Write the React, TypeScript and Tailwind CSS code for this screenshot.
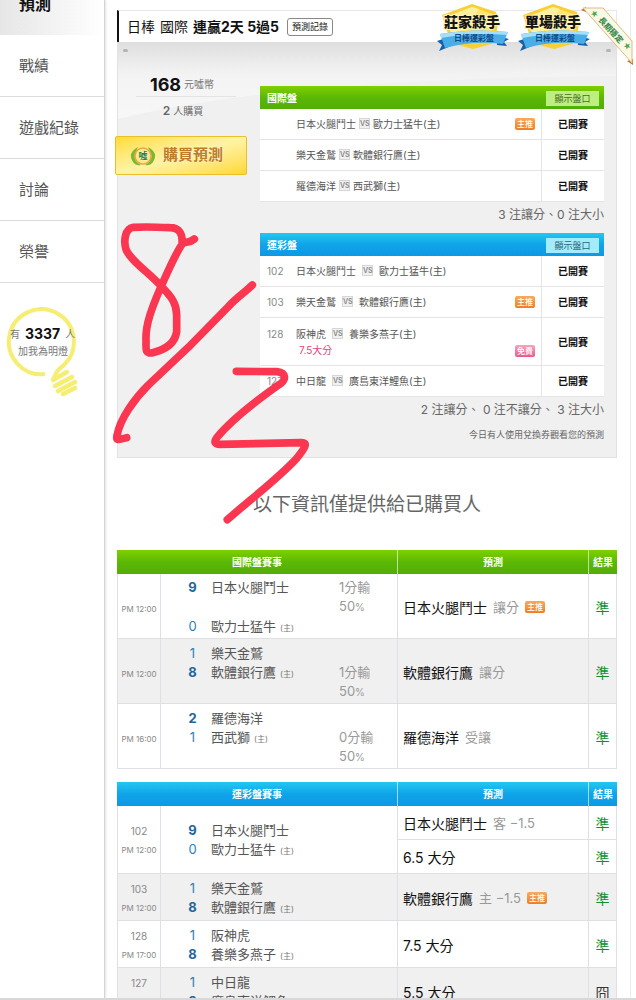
import type { ReactNode } from "react";

const FONT = "font-['Inter','Noto_Sans_CJK_TC',sans-serif]";
const GREEN = "bg-linear-to-b from-[#7fd000] via-[#5bb804] to-[#52ad08]";
const BLUE = "bg-linear-to-b from-[#23c8f0] via-[#10a4e8] to-[#0d98e6]";

function Vs({ wide }: { wide?: boolean }) {
  return (
    <span
      className={`inline-block h-[11px] w-[11px] border border-[#d6d6d6] bg-[#f0f0f0] text-center align-[2px] text-[7px] leading-[9px] font-semibold text-[#888] ${wide ? "mx-[6px]" : "mx-[3px]"}`}
    >
      VS
    </span>
  );
}

function Tag({ children, pink }: { children: ReactNode; pink?: boolean }) {
  return (
    <span
      className={`inline-block h-3 w-5 rounded-[2px] text-center text-[8px] leading-[12px] font-medium text-white ${pink ? "bg-linear-to-b from-[#f5a3c0] to-[#e8588c]" : "bg-linear-to-b from-[#f8a95a] to-[#ef7d22]"}`}
    >
      {children}
    </span>
  );
}

type Match = { no?: string; away: string; home: string; tag?: string; extra?: string };

function OddsTable({ title, blue, rows }: { title: string; blue?: boolean; rows: Match[] }) {
  return (
    <table className="w-full table-fixed border-separate border-spacing-0 bg-white text-left text-[10px] leading-4 text-[#555]">
      <colgroup>
        <col className="w-9" />
        <col />
        <col className="w-[30px]" />
        <col className="w-[63px]" />
      </colgroup>
      <thead>
        <tr className={blue ? BLUE : GREEN}>
          <th colSpan={3} className="h-[23px] pl-[7px] text-left font-bold text-white">
            {title}
          </th>
          <th className="pr-[5px] text-right">
            <button
              type="button"
              className={`h-[15px] w-[53px] text-[9px] leading-[15px] font-normal ${blue ? "bg-[#a4ecfb] text-[#2c6478]" : "bg-[#bdee82] text-[#4a6b26]"}`}
            >
              顯示盤口
            </button>
          </th>
        </tr>
      </thead>
      <tbody>
        {rows.map((r) => (
          <tr key={r.away}>
            <td className={`border-b border-[#e4e4e4] pl-[7px] text-[#888] ${r.extra ? "h-12 pt-2 align-top" : "h-[31px]"}`}>{r.no}</td>
            <td className={`border-b border-[#e4e4e4] whitespace-nowrap ${r.extra ? "pt-2 align-top" : ""}`}>
              {r.away}
              <Vs wide={blue} />
              {r.home}(主)
              {r.extra && <div className="pl-[3px] text-[#e0457c]">{r.extra}</div>}
            </td>
            <td className={`border-b border-[#e4e4e4] ${r.extra ? "pb-2 align-bottom" : ""}`}>
              {r.tag && (
                <div className="flex pl-1">
                  <Tag pink={!!r.extra}>{r.tag}</Tag>
                </div>
              )}
            </td>
            <td className="border-b border-l border-[#e4e4e4] text-center font-bold text-[#111]">已開賽</td>
          </tr>
        ))}
      </tbody>
    </table>
  );
}

type Pick = { text: string; note?: string; tag?: boolean; result: string };
type Game = {
  no?: string;
  time: string;
  away: string;
  home: string;
  score: [number, number];
  margin?: { side: "away" | "home"; text: string };
  picks: Pick[];
};

function TeamLine({ score, win, name, host, margin }: { score: number; win: boolean; name: string; host?: boolean; margin?: string }) {
  return (
    <div className="flex items-start">
      <span className={`w-[50px] shrink-0 pl-[13px] text-center ${win ? "font-bold text-[#1f669c]" : "text-[#2f7fb5]"}`}>{score}</span>
      <span className="flex-1 whitespace-nowrap">
        {name}
        {host && <span className="ml-1 text-[8px] text-[#777]">(主)</span>}
      </span>
      {margin && (
        <span className="w-[58px] text-[#999]">
          {margin}
          <br />
          50<span className="text-[10px]">%</span>
        </span>
      )}
    </div>
  );
}

function ResultTable({ title, blue, games }: { title: string; blue?: boolean; games: Game[] }) {
  const head = "h-6 border-l border-white/60 text-[10px] font-bold text-white first:border-l-0";
  const cell = "border-b border-l border-[#e0e0e4]";
  return (
    <table className="w-full table-fixed border-separate border-spacing-0 text-[13px] leading-[19px] text-[#555]">
      <colgroup>
        <col className="w-[43px]" />
        <col />
        <col className="w-[191px]" />
        <col className="w-[29px]" />
      </colgroup>
      <thead>
        <tr className={blue ? BLUE : GREEN}>
          <th colSpan={2} className={head}>{title}</th>
          <th className={head}>預測</th>
          <th className={head}>結果</th>
        </tr>
      </thead>
      {games.map((g, i) => (
        <tbody key={g.away} className={i % 2 ? "bg-[#f0f0f0]" : "bg-white"}>
          {g.picks.map((p, n) => (
            <tr key={p.text}>
              {n === 0 && (
                <>
                  <td
                    rowSpan={g.picks.length}
                    className={`${cell} text-center text-[8px] whitespace-nowrap text-[#888] ${blue ? "pt-[3px]" : "pt-[6px]"}`}
                  >
                    {g.no && <div className="text-[10px]">{g.no}</div>}
                    {g.time}
                  </td>
                  <td rowSpan={g.picks.length} className={`${cell} pt-[3px]`}>
                    <TeamLine
                      score={g.score[0]}
                      win={g.score[0] > g.score[1]}
                      name={g.away}
                      margin={g.margin?.side === "away" ? g.margin.text : undefined}
                    />
                    <TeamLine
                      score={g.score[1]}
                      win={g.score[1] > g.score[0]}
                      name={g.home}
                      host
                      margin={g.margin?.side === "home" ? g.margin.text : undefined}
                    />
                  </td>
                </>
              )}
              <td className={`${cell} pt-[2px] pl-[5px] whitespace-nowrap ${g.picks.length > 1 ? "h-[34px]" : blue ? "h-[47px]" : "h-[65px]"}`}>
                <div className="flex items-center gap-[6px]">
                  <span className="text-[14px] text-[#111]">{p.text}</span>
                  {p.note && <span className="text-[#999]">{p.note}</span>}
                  {p.tag && <Tag>主推</Tag>}
                </div>
              </td>
              <td className={`${cell} border-r pt-[2px] text-center text-[14px] ${p.result === "準" ? "text-[#0f8f2e]" : "text-[#333]"}`}>{p.result}</td>
            </tr>
          ))}
        </tbody>
      ))}
    </table>
  );
}

function Medal({ label }: { label: string }) {
  return (
    <svg viewBox="0 0 72 48" className="h-12 w-[72px]" role="img" aria-label={label}>
      <path d="M35 1 L59 9 L61 20 L58 40 L36 46 L14 40 L5 12 Z" fill="#f9cf35" />
      <path d="M35 4 L55 11 L57 20 L54 30 H14 L9 14 Z" fill="#ffe671" />
      <path d="M35 4 L42 6 L24 30 H14 L9 14 Z" fill="#fff0a0" />
      <path d="M0 38 L12 34 L14 43 L2 48 L5 42Z" fill="#1760a8" />
      <path d="M72 36 L60 33 L60 42 L70 43 L67 39Z" fill="#1760a8" />
      <path d="M3 31 Q36 25 71 29 L66 41 Q36 37 8 45 Z" fill="#49aee8" />
      <path d="M3 31 Q36 25 71 29 L70 32 Q36 29 4 35 Z" fill="#a5def9" />
      <text x="35" y="24" textAnchor="middle" fontSize="14" fontWeight="900" fill="#151515" stroke="#fff3b0" strokeWidth="2" paintOrder="stroke">
        {label}
      </text>
      <text x="37" y="38" textAnchor="middle" fontSize="8" fontWeight="600" fill="#0e4a86">
        日棒運彩盤
      </text>
    </svg>
  );
}

const sideLinks = ["戰績", "遊戲紀錄", "討論", "榮譽"];

export default function App() {
  return (
    <div className={`relative flex h-screen flex-col overflow-hidden bg-white ${FONT}`}>
      <div className="flex min-h-0 flex-1 overflow-hidden">
        <aside className="w-[105px] shrink-0 border-r border-[#d4d4d4] shadow-[1px_0_2px_#e4e4e4]">
          <nav>
            <a href="#forecast" className="block h-[35px] overflow-hidden bg-linear-to-r from-[#e6e6e6] to-white pl-[19px] text-base leading-[8px] font-bold text-[#111]">
              預測
            </a>
            {sideLinks.map((t) => (
              <a key={t} href={"#" + t} className="flex h-[62px] items-center border-b border-[#dcdcdc] pt-[2px] pl-[19px] text-[15px] text-[#555]">
                {t}
              </a>
            ))}
          </nav>
          <div className="relative mt-6 h-[96px]">
            <svg viewBox="0 0 90 96" className="absolute top-0 left-0 h-24 w-[90px]" fill="none" stroke="#f6ee72" aria-hidden="true">
              <path d="M45 67 A32.500 32.500 0 1 1 64 58 Q55 64 53 74" strokeWidth="4" />
              <path d="M53 73 L67 65 M55 79 L72 70 M58 84 L75 75 M63 87 L75 81" strokeWidth="4.500" strokeLinecap="round" />
            </svg>
            <div className="relative pt-[18px] text-[10px] leading-4 whitespace-nowrap text-[#777]">
              <p className="flex h-[18px] items-center gap-[5px] pl-[10px]">
                有<strong className="text-[14px] text-[#111]">3337</strong>人
              </p>
              <p className="pl-[18px]">加我為明燈</p>
            </div>
          </div>
        </aside>

        <main className="relative mr-[5px] min-w-0 flex-1 border-r border-[#ececec] pt-[10px] pr-[13px] pl-3">
          <header className="flex h-8 items-center border-t border-r border-l-2 border-t-[#e8e8e8] border-r-[#e8e8e8] border-l-[#111] pl-2 text-[14px] text-[#111]">
            <h1 className="flex items-center gap-[5px] whitespace-nowrap">
              <span>日棒</span>
              <span>國際</span>
              <strong>連贏2天 5過5</strong>
            </h1>
            <button type="button" className="ml-2 h-[18px] w-[46px] rounded-[3px] border border-[#888] text-[9px] leading-4 whitespace-nowrap">
              預測記錄
            </button>
          </header>

          <div className="absolute top-[3px] right-[40px] z-10 flex gap-[9px]">
            <Medal label="莊家殺手" />
            <Medal label="單場殺手" />
          </div>
          <svg viewBox="0 0 52 58" className="absolute top-[7px] -right-[3px] z-10 h-[58px] w-[52px]" role="img" aria-label="長期穩定">
            <path d="M0 3 L5 0 V5Z M52 52 V58 L46 54Z" fill="#c66b31" />
            <path d="M2 1 H22 L51 34 V56 Z" fill="#fbf8e6" stroke="#dcbd83" strokeWidth="1" />
            <g transform="translate(30 23) rotate(47)">
              <text textAnchor="middle" x="0" y="3" fontSize="8" fontWeight="700" fill="#2f8444">長期穩定</text>
              <text textAnchor="middle" x="-23" y="4" fontSize="8" fill="#48a64c">★</text>
              <text textAnchor="middle" x="23" y="2" fontSize="8" fill="#48a64c">★</text>
            </g>
          </svg>

          <section className="relative flex h-[416px] border border-t-0 border-[#e2e2e2] bg-[#f0f0f0] bg-linear-to-b from-[#dedede] via-[#f0f0f0] via-8% to-[#f0f0f0] pr-3">
            <svg viewBox="0 0 498 90" preserveAspectRatio="none" className="pointer-events-none absolute top-0 left-0 h-[90px] w-full" aria-hidden="true">
              <defs>
                <linearGradient id="sheen" x1="0" y1="0" x2="0" y2="1">
                  <stop offset="0" stopColor="#fff" stopOpacity="0" />
                  <stop offset="1" stopColor="#fff" stopOpacity="0.500" />
                </linearGradient>
              </defs>
              <path d="M0 77 Q170 36 498 34 V0 H0 Z" fill="url(#sheen)" />
            </svg>
            <i className="absolute top-[7px] left-[5px] h-[3px] w-[5px] rounded-full bg-[#b4b4b4]" />
            <i className="absolute top-[7px] right-[5px] h-[3px] w-[5px] rounded-full bg-[#b4b4b4]" />
            <div className="relative w-[142px] shrink-0 pt-[30px]">
              <p className="mr-6 ml-[18px] flex h-[25px] items-center justify-center gap-[3px] border-b border-[#e4e4e4] pr-2 text-[10px] text-[#777]">
                <strong className="text-[18px] text-[#111]">168</strong>元噓幣
              </p>
              <p className="flex h-7 items-center justify-center gap-[3px] pr-3 text-[10px] text-[#666]">
                <strong className="text-xs font-semibold">2</strong>人購買
              </p>
              <button
                type="button"
                className="mt-[11px] -ml-[3px] flex h-[39px] w-[132px] items-center gap-[6px] rounded-[2px] border border-[#e8bf2c] bg-linear-to-br from-[#ffdc2c] via-[#fff3a4] to-[#ffd820] pl-[13px] text-[15px] font-bold whitespace-nowrap text-[#bd7c25] [text-shadow:0_0_2px_white]"
              >
                <svg viewBox="0 0 28 22" className="h-[22px] w-7" aria-hidden="true">
                  <path d="M9 2 Q-2 8 4 17 Q7 21 12 20 Q4 16 6 9Z M19 2 Q30 8 24 17 Q21 21 16 20 Q24 16 22 9Z" fill="#77b934" />
                  <circle cx="14" cy="11" r="8" fill="#fce887" stroke="#eca63c" strokeWidth="1.500" />
                  <text x="14" y="14" textAnchor="middle" fontSize="9" fontWeight="700" fill="#23823c">噓</text>
                </svg>
                購買預測
              </button>
            </div>
            <div className="relative min-w-0 flex-1 pt-11 text-right text-[#666]">
              <OddsTable
                title="國際盤"
                rows={[
                  { away: "日本火腿鬥士", home: "歐力士猛牛", tag: "主推" },
                  { away: "樂天金鷲", home: "軟體銀行鷹" },
                  { away: "羅德海洋", home: "西武獅" },
                ]}
              />
              <p className="h-[31px] pt-[2px] text-xs leading-[22px]">3 注讓分、0 注大小</p>
              <OddsTable
                title="運彩盤"
                blue
                rows={[
                  { no: "102", away: "日本火腿鬥士", home: "歐力士猛牛" },
                  { no: "103", away: "樂天金鷲", home: "軟體銀行鷹", tag: "主推" },
                  { no: "128", away: "阪神虎", home: "養樂多燕子", tag: "免費", extra: "7.5大分" },
                  { no: "127", away: "中日龍", home: "廣島東洋鯉魚" },
                ]}
              />
              <p className="pt-[2px] text-xs leading-[22px]">2 注讓分、 0 注不讓分、 3 注大小</p>
              <p className="pt-[6px] text-[9px] leading-4">今日有人使用兌換券觀看您的預測</p>
            </div>
          </section>

          <h2 className="flex h-[92px] items-center justify-center pt-[3px] text-[19px] text-[#666]">以下資訊僅提供給已購買人</h2>

          <div className="flex flex-col gap-[13px]">
            <ResultTable
              title="國際盤賽事"
              games={[
                { time: "PM 12:00", away: "日本火腿鬥士", home: "歐力士猛牛", score: [9, 0], margin: { side: "away", text: "1分輸" }, picks: [{ text: "日本火腿鬥士", note: "讓分", tag: true, result: "準" }] },
                { time: "PM 12:00", away: "樂天金鷲", home: "軟體銀行鷹", score: [1, 8], margin: { side: "home", text: "1分輸" }, picks: [{ text: "軟體銀行鷹", note: "讓分", result: "準" }] },
                { time: "PM 16:00", away: "羅德海洋", home: "西武獅", score: [2, 1], margin: { side: "home", text: "0分輸" }, picks: [{ text: "羅德海洋", note: "受讓", result: "準" }] },
              ]}
            />
            <ResultTable
              title="運彩盤賽事"
              blue
              games={[
                { no: "102", time: "PM 12:00", away: "日本火腿鬥士", home: "歐力士猛牛", score: [9, 0], picks: [{ text: "日本火腿鬥士", note: "客 −1.5", result: "準" }, { text: "6.5 大分", result: "準" }] },
                { no: "103", time: "PM 12:00", away: "樂天金鷲", home: "軟體銀行鷹", score: [1, 8], picks: [{ text: "軟體銀行鷹", note: "主 −1.5", tag: true, result: "準" }] },
                { no: "128", time: "PM 17:00", away: "阪神虎", home: "養樂多燕子", score: [1, 8], picks: [{ text: "7.5 大分", result: "準" }] },
                { no: "127", time: "PM 17:00", away: "中日龍", home: "廣島東洋鯉魚", score: [1, 2], picks: [{ text: "5.5 大分", result: "囧" }] },
              ]}
            />
          </div>
        </main>
      </div>
      <div className="h-[2px] shrink-0 bg-[#d8d8d8]" />

      <svg
        viewBox="0 0 645 945"
        className="pointer-events-none absolute top-[215px] left-[105px] h-[315px] w-[215px]"
        fill="none"
        stroke="#fb3650"
        strokeWidth="23"
        strokeLinecap="round"
        strokeLinejoin="round"
        aria-hidden="true"
      >
        <path d="M268 72 C252 86 238 78 231 88 C234 55 222 38 195 38 C155 36 115 35 85 37 C58 42 56 80 63 103 C75 135 130 172 165 210 C205 250 214 268 215 300 V350 C210 385 180 405 140 414 C118 415 124 400 123 375 C121 330 140 280 165 222 C190 165 212 115 231 88" />
        <path d="M442 210 C420 232 395 247 370 275 L250 397 L130 510 C90 550 45 610 36 662 C32 680 45 672 65 668" />
        <path d="M394 469 L515 470 C545 474 545 494 522 509 C450 560 375 620 336 667 C325 682 330 688 345 688 L590 683 C610 683 600 699 575 730 C520 790 440 850 367 914" />
      </svg>
    </div>
  );
}
